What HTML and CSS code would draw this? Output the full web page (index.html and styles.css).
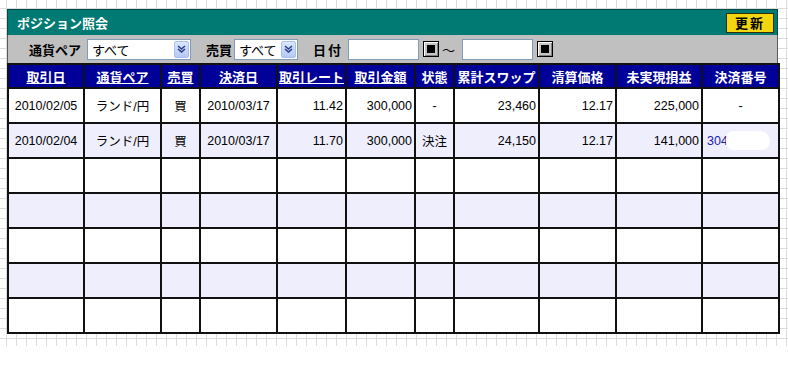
FILE: index.html
```html
<!DOCTYPE html>
<html lang="ja">
<head>
  <meta charset="UTF-8">
  <title>ポジション照会</title>
  <link rel="stylesheet" href="styles.css">
</head>
<body>
  <div class="sheet">
    <div class="panel">
      <div class="title-bar">
        <span class="title">ポジション照会</span>
        <button class="refresh">更新</button>
      </div>

      <!-- 検索条件 -->
      <div class="filter-bar">
        <span class="filter-label">通貨ペア</span>
        <div class="combo combo-pair">
          <span>すべて</span>
          <span class="combo-arrow">
            <svg width="9" height="8" viewBox="0 0 9 8"><polyline points="1,1 4.5,4 8,1" fill="none" stroke="#2b3f8a" stroke-width="1.6"/><polyline points="1,4 4.5,7 8,4" fill="none" stroke="#2b3f8a" stroke-width="1.6"/></svg>
          </span>
        </div>
        <span class="filter-label label-side">売買</span>
        <div class="combo combo-side">
          <span>すべて</span>
          <span class="combo-arrow">
            <svg width="9" height="8" viewBox="0 0 9 8"><polyline points="1,1 4.5,4 8,1" fill="none" stroke="#2b3f8a" stroke-width="1.6"/><polyline points="1,4 4.5,7 8,4" fill="none" stroke="#2b3f8a" stroke-width="1.6"/></svg>
          </span>
        </div>
        <span class="filter-label label-date">日付</span>
        <input type="text" class="date-input date-from">
        <span class="cal-btn"><span class="cal-dot"></span></span>
        <span class="tilde">〜</span>
        <input type="text" class="date-input date-to">
        <span class="cal-btn"><span class="cal-dot"></span></span>
      </div>

      <table class="positions">
        <colgroup>
          <col style="width:76px"><col style="width:77px"><col style="width:39px"><col style="width:77px">
          <col style="width:69px"><col style="width:69px"><col style="width:39px"><col style="width:85px">
          <col style="width:77px"><col style="width:86px"><col style="width:77px">
        </colgroup>
        <thead>
          <tr>
            <th><a href="#">取引日</a></th>
            <th><a href="#">通貨ペア</a></th>
            <th><a href="#">売買</a></th>
            <th><a href="#">決済日</a></th>
            <th><a href="#">取引レート</a></th>
            <th><a href="#">取引金額</a></th>
            <th>状態</th>
            <th>累計スワップ</th>
            <th>清算価格</th>
            <th>未実現損益</th>
            <th>決済番号</th>
          </tr>
        </thead>
        <tbody>
          <tr>
            <td class="c">2010/02/05</td>
            <td class="c">ランド/円</td>
            <td class="c">買</td>
            <td class="c">2010/03/17</td>
            <td class="r">11.42</td>
            <td class="r">300,000</td>
            <td class="c">-</td>
            <td class="r">23,460</td>
            <td class="r">12.17</td>
            <td class="r">225,000</td>
            <td class="c">-</td>
          </tr>
          <tr class="alt">
            <td class="c">2010/02/04</td>
            <td class="c">ランド/円</td>
            <td class="c">買</td>
            <td class="c">2010/03/17</td>
            <td class="r">11.70</td>
            <td class="r">300,000</td>
            <td class="c">決注</td>
            <td class="r">24,150</td>
            <td class="r">12.17</td>
            <td class="r">141,000</td>
            <td class="l"><span class="order-no">304</span><span class="mask"></span></td>
          </tr>
          <tr><td></td><td></td><td></td><td></td><td></td><td></td><td></td><td></td><td></td><td></td><td></td></tr>
          <tr class="alt"><td></td><td></td><td></td><td></td><td></td><td></td><td></td><td></td><td></td><td></td><td></td></tr>
          <tr><td></td><td></td><td></td><td></td><td></td><td></td><td></td><td></td><td></td><td></td><td></td></tr>
          <tr class="alt"><td></td><td></td><td></td><td></td><td></td><td></td><td></td><td></td><td></td><td></td><td></td></tr>
          <tr><td></td><td></td><td></td><td></td><td></td><td></td><td></td><td></td><td></td><td></td><td></td></tr>
        </tbody>
      </table>
    </div>
  </div>
</body>
</html>
```

FILE: styles.css
```css
body {
  margin: 0;
  background: #fff;
  font-family: "Liberation Sans", "Noto Sans CJK JP", sans-serif;
  color: #000;
}
.sheet {
  width: 788px;
  height: 346px;
  box-sizing: border-box;
  padding: 9px 0 0 7px;
  background-color: #fff;
  background-image:
    linear-gradient(#dcdcdc 1px, transparent 1px),
    linear-gradient(90deg, #dcdcdc 1px, transparent 1px);
  background-size: 10px 10px;
  background-position: 6px 8px;
}
.panel {
  width: 771px;
  background: #fff;
}
.title-bar {
  height: 26px;
  box-sizing: border-box;
  background: #007a72;
  border: 1px solid #004a45;
  border-bottom: 0;
  display: flex;
  align-items: center;
  justify-content: space-between;
  padding: 0 3px 0 9px;
}
.title {
  color: #fff;
  font-weight: bold;
  font-size: 13px;
  font-family: "Noto Sans CJK JP", sans-serif;
}
.refresh {
  width: 48px;
  height: 20px;
  padding: 0;
  background: #f2d60e;
  border: 1px solid #2f2f10;
  font-family: "Noto Sans CJK JP", sans-serif;
  font-weight: bold;
  font-size: 13px;
  letter-spacing: 2px;
  line-height: 18px;
  color: #000;
}
.filter-bar {
  height: 28px;
  box-sizing: border-box;
  background: #c0c0c0;
  border-left: 1px solid #5a5a5a;
  border-right: 1px solid #5a5a5a;
  display: flex;
  align-items: center;
  padding-left: 21px;
  font-family: "Noto Sans CJK JP", sans-serif;
}
.filter-label {
  font-weight: bold;
  font-size: 13px;
}
.label-side {
  margin-left: 15px;
}
.label-date {
  margin-left: 15px;
  letter-spacing: 2px;
}
.combo {
  height: 21px;
  box-sizing: border-box;
  margin-left: 6px;
  background: #fff;
  border: 1px solid #7f9db9;
  display: flex;
  align-items: center;
  justify-content: space-between;
  padding-left: 4px;
  font-size: 13px;
}
.combo-pair {
  width: 104px;
}
.combo-side {
  width: 64px;
  margin-left: 2px;
}
.combo-arrow {
  width: 15px;
  height: 17px;
  box-sizing: border-box;
  margin-right: 1px;
  border: 1px solid #a9bfef;
  border-radius: 2px;
  background: linear-gradient(#dbe6fe, #b5c9f6);
  display: flex;
  align-items: center;
  justify-content: center;
}
.date-input {
  width: 71px;
  height: 21px;
  box-sizing: border-box;
  margin: 0 0 0 5px;
  border: 1px solid #7f9db9;
  background: #fff;
  padding: 0;
}
.date-to {
  margin-left: 7px;
}
.cal-btn {
  width: 16px;
  height: 16px;
  box-sizing: border-box;
  margin-left: 4px;
  border: 1px solid #000;
  background: #c6c6c6;
  box-shadow: inset 1px 1px 0 #fff, inset -1px -1px 0 #808080;
  display: flex;
  align-items: center;
  justify-content: center;
}
.cal-dot {
  width: 8px;
  height: 8px;
  background: #000;
}
.tilde {
  margin-left: 3px;
  font-size: 13px;
}
.positions {
  width: 771px;
  border-collapse: collapse;
  table-layout: fixed;
  font-size: 12.5px;
}
.positions th,
.positions td {
  border: 2px solid #111;
  padding: 0;
  white-space: nowrap;
  overflow: hidden;
}
.positions th {
  height: 22px;
  background: #000099;
  color: #fff;
  font-family: "Noto Sans CJK JP", sans-serif;
  font-size: 13px;
  font-weight: bold;
  text-align: center;
}
.positions th a {
  color: #fff;
  text-decoration: underline;
}
.positions td {
  height: 33px;
  background: #fff;
}
.positions tr.alt td {
  background: #eeeefc;
}
.c {
  text-align: center;
}
.r {
  text-align: right;
  padding-right: 2px !important;
}
.l {
  text-align: left;
  padding-left: 4px !important;
}
.order-no {
  color: #1c1ca8;
  vertical-align: middle;
}
.mask {
  display: inline-block;
  width: 44px;
  height: 19px;
  margin-left: -2px;
  background: #fff;
  border-radius: 8px 12px 10px 9px;
  vertical-align: middle;
}
```
